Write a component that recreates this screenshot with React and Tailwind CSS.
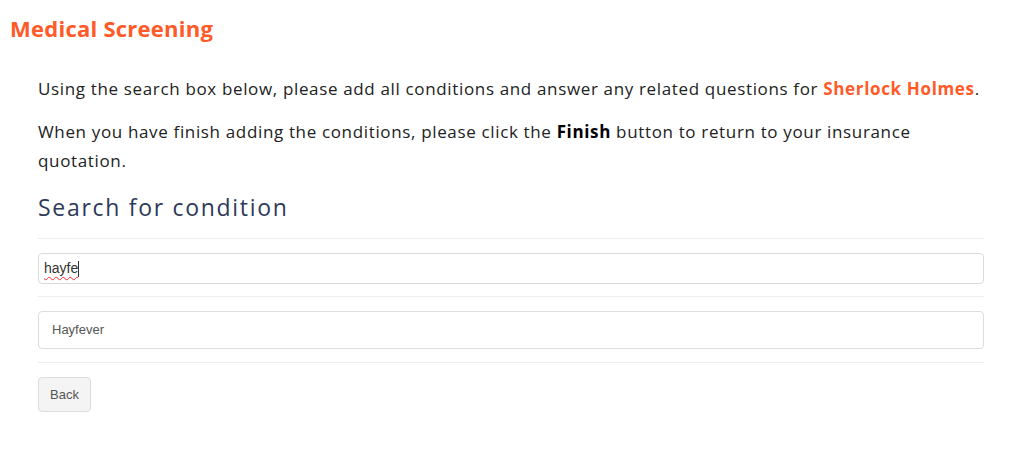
export default function App() {
  return (
    <div className="w-[1024px] h-[450px] bg-white overflow-hidden" style={{ fontFamily: "'Open Sans', 'Noto Sans', sans-serif" }}>
      <h1 className="pl-[10px] pt-[14px] text-[22px] leading-[28px] font-bold tracking-[0.25px] text-[#ff5a28]">Medical Screening</h1>
      <div className="mx-[38px] w-[946px] mt-[32px]">
        <p className="text-[17px] leading-[29px] tracking-[0.65px] text-[#222]">
          Using the search box below, please add all conditions and answer any related questions for{" "}
          <span className="font-bold text-[#ff5a28]">Sherlock Holmes</span>.
        </p>
        <p className="mt-[14px] text-[17px] leading-[29px] tracking-[0.65px] text-[#222]">
          When you have finish adding the conditions, please click the <span className="font-bold text-black">Finish</span> button to return to your insurance quotation.
        </p>
        <h2 className="mt-[16px] text-[23px] leading-[32px] tracking-[1.7px] text-[#2e3a59]">Search for condition</h2>
        <div className="mt-[15px] border-t border-[#eeeeee]" />
        <div className="mt-[14px] h-[31px] border border-[#d9d9d9] rounded-[4px] flex items-center px-[5px]">
          <span className="text-[14px] text-[#333] underline decoration-wavy decoration-red-500 decoration-[1px] underline-offset-[3px]" style={{ fontFamily: "'Liberation Sans', Arial, sans-serif" }}>hayfe</span>
          <span className="w-px h-[16px] bg-[#333]" />
        </div>
        <div className="mt-[12px] border-t border-[#eeeeee]" />
        <div className="mt-[14px] h-[38px] border border-[#dddddd] rounded-[4px] flex items-center px-[13px]">
          <span className="text-[13px] text-[#555]" style={{ fontFamily: "'Liberation Sans', Arial, sans-serif" }}>Hayfever</span>
        </div>
        <div className="mt-[13px] border-t border-[#eeeeee]" />
        <button className="mt-[14px] h-[35px] px-[11px] bg-[#f4f4f4] border border-[#dcdcdc] rounded-[4px] text-[13px] text-[#555]" style={{ fontFamily: "'Liberation Sans', Arial, sans-serif" }}>Back</button>
      </div>
    </div>
  );
}
